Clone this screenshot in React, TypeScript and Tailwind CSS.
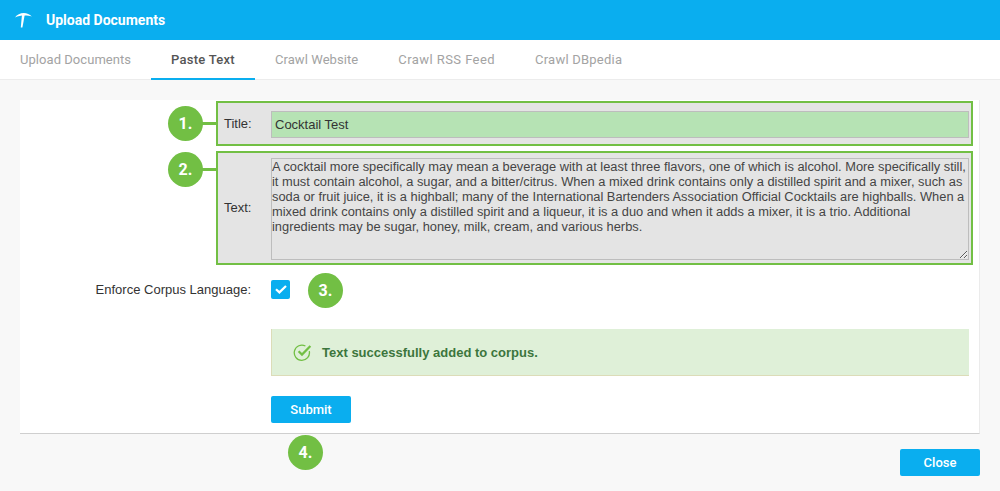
import React from "react";

const cocktailText =
  "A cocktail more specifically may mean a beverage with at least three flavors, one of which is alcohol. More specifically still, it must contain alcohol, a sugar, and a bitter/citrus. When a mixed drink contains only a distilled spirit and a mixer, such as soda or fruit juice, it is a highball; many of the International Bartenders Association Official Cocktails are highballs. When a mixed drink contains only a distilled spirit and a liqueur, it is a duo and when it adds a mixer, it is a trio. Additional ingredients may be sugar, honey, milk, cream, and various herbs.";

const tabs = [
  { label: "Upload Documents", className: "text-[#a3a3a3] tracking-[0.05px]" },
  { label: "Paste Text", className: "text-[#555555] font-medium tracking-[0.25px] border-b-2 border-[#0aaeef] pt-[2px]" },
  { label: "Crawl Website", className: "text-[#a3a3a3] tracking-[0.08px]" },
  { label: "Crawl RSS Feed", className: "text-[#a3a3a3] tracking-[0.43px]" },
  { label: "Crawl DBpedia", className: "text-[#a3a3a3] tracking-[0.23px]" },
];

const Step = ({ label, className }: { label: string; className: string }) => (
  <div
    className={`absolute w-[35px] h-[35px] rounded-full bg-[#72bf44] text-white flex items-center justify-center font-['Roboto',sans-serif] font-bold text-[16px] ${className}`}
  >
    {label}
  </div>
);

const Connector = ({ className }: { className: string }) => (
  <div className={`absolute h-[3px] w-[14px] bg-[#72bf44] ${className}`} />
);

const App: React.FC = () => {
  return (
    <div className="w-[1000px] h-[491px] overflow-hidden bg-[#f8f8f8] relative font-['Liberation_Sans',Arial,sans-serif]">
      <header className="h-10 bg-[#0aaeef] flex items-center pl-[15px] text-white">
        <svg width="17" height="16" viewBox="0 0 17 16" className="mr-[14px]">
          <path d="M0 5.4C3.5 0 12.5-0.8 16.8 4.6C12 3 5 3.2 0 5.4Z" fill="#fff" />
          <path d="M7 2.4H9.8L7.4 15.4H5.8Z" fill="#fff" />
        </svg>
        <span className="font-['Roboto',sans-serif] font-bold text-[14px]">Upload Documents</span>
      </header>

      <nav className="h-10 bg-white border-b border-[#ececec] flex">
        {tabs.map((tab) => (
          <div
            key={tab.label}
            className={`h-10 px-5 flex items-center font-['Roboto',sans-serif] text-[13px] ${tab.className}`}
          >
            {tab.label}
          </div>
        ))}
      </nav>

      <main className="mt-5 mx-5 h-[334px] bg-white border-r border-b border-r-[#ebebeb] border-b-[#cfcfcf] pt-px relative">
        <div className="ml-[196px] mr-[6px] h-[45px] bg-[#e4e4e4] border-[2px] border-[#72bf44] flex items-center pl-[6px] pr-[2px]">
          <span className="w-[47px] text-[13px] text-[#333333]">Title:</span>
          <input
            readOnly
            value="Cocktail Test"
            className="flex-1 h-[27px] mt-[2px] px-[3px] bg-[#b6e3b4] border border-[#bdbdbd] text-[13px] text-[#333333] outline-none"
          />
        </div>

        <div className="ml-[196px] mr-[6px] mt-[5px] h-[114px] bg-[#e4e4e4] border-[2px] border-[#72bf44] flex items-center pl-[6px] pr-[2px]">
          <span className="w-[47px] text-[13px] text-[#333333]">Text:</span>
          <textarea
            readOnly
            value={cocktailText}
            className="flex-1 h-[102px] mt-[2px] bg-[#e4e4e4] border border-[#bdbdbd] px-0 py-0 text-[12.85px] leading-[15px] text-[#444444] outline-none"
          />
        </div>

        <div className="mt-[15px] flex items-center h-[19px]">
          <span className="w-[231px] text-right text-[13px] text-[#333333]">Enforce Corpus Language:</span>
          <div className="ml-5 w-[19px] h-[19px] rounded-[2px] bg-[#0aaeef] flex items-center justify-center">
            <svg width="12" height="9" viewBox="0 0 12 9" fill="none">
              <path d="M1 4.2L4.4 7.4L11 1" stroke="#fff" strokeWidth="2.2" />
            </svg>
          </div>
        </div>

        <div className="ml-[251px] mr-[10px] mt-[30px] h-[47px] bg-[#dff0d8] border-l border-b border-[#dcdcb8] flex items-center pl-[21px]">
          <svg width="19" height="19" viewBox="0 0 19 19" fill="none" className="mr-[10px]">
            <path d="M16.3 8.2A7.6 7.6 0 1 1 12.4 3" stroke="#72bf44" strokeWidth="1.3" />
            <path d="M5.6 8.2L9 11.6L17.4 3" stroke="#72bf44" strokeWidth="2.2" />
          </svg>
          <span className="text-[13px] font-bold text-[#3c763d] pt-px">Text successfully added to corpus.</span>
        </div>

        <button className="block ml-[251px] mt-5 w-20 h-[27px] rounded-[2px] bg-[#0aaeef] text-white font-['Roboto',sans-serif] font-medium text-[13px]">
          Submit
        </button>

        <Connector className="left-[182px] top-[22px]" />
        <Connector className="left-[182px] top-[68px]" />
        <Step label="1." className="left-[148px] top-[6px]" />
        <Step label="2." className="left-[148px] top-[52px]" />
        <Step label="3." className="left-[288px] top-[173px]" />
        <Step label="4." className="left-[268px] top-[335px]" />
      </main>

      <div className="flex justify-end pr-5 mt-[15px]">
        <button className="w-20 h-[27px] rounded-[2px] bg-[#0aaeef] text-white font-['Roboto',sans-serif] font-medium text-[13px]">
          Close
        </button>
      </div>
    </div>
  );
};

export default App;
